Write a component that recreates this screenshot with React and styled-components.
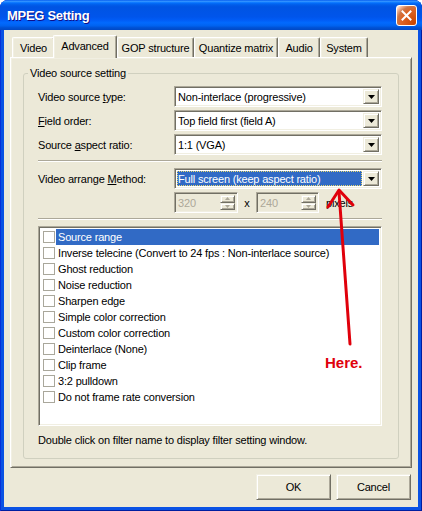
import React from "react";
import styled, { createGlobalStyle } from "styled-components";

const face = "#ECE9D8";
const shadow = "#ACA899";
const dark = "#716F64";
const light = "#F1EFE2";
const select = "#316AC5";
const ui = `"Liberation Sans", Arial, sans-serif`;

const GlobalStyle = createGlobalStyle`
  html, body { margin: 0; padding: 0; background: #ffffff; }
  body { font-family: ${ui}; font-size: 11px; letter-spacing: -0.18px; color: #000; }
  * { box-sizing: border-box; }
`;

const Window = styled.div`
  position: relative;
  width: 422px;
  height: 511px;
  display: flex;
  flex-direction: column;
  background: #0A52E4;
  border-radius: 8px 8px 0 0;
  box-shadow: inset 1px 0 #0831D9, inset -1px 0 #001EA0, inset 0 -1px #001EA0;
  overflow: hidden;
`;

const TitleBar = styled.div`
  flex: none;
  height: 30px;
  display: flex;
  align-items: center;
  justify-content: space-between;
  padding: 0 5px 0 7px;
  background: linear-gradient(
    180deg,
    #0058ee 0%,
    #3593ff 4%,
    #288eff 6%,
    #127dff 8%,
    #036ffc 10%,
    #0262ee 14%,
    #0057e5 20%,
    #0054e3 24%,
    #0055eb 56%,
    #005bf5 66%,
    #026afe 76%,
    #0062ef 86%,
    #0052d6 92%,
    #0048c4 100%
  );
`;

const Title = styled.span`
  color: #fff;
  font: bold 13px ${ui};
  letter-spacing: -0.3px;
  text-shadow: 1px 1px #0f1089;
`;

const CloseButton = styled.div`
  width: 21px;
  height: 21px;
  border: 1px solid #fff;
  border-radius: 3px;
  background: radial-gradient(
    circle at 90% 90%,
    #cc4600 0%,
    #dc6527 55%,
    #cd7546 70%,
    #ffccb2 90%,
    #fff 100%
  );
  display: flex;
  align-items: center;
  justify-content: center;
`;

const Client = styled.div`
  flex: 1;
  margin: 0 4px 4px;
  background: ${face};
  padding: 5px 6px 0;
  display: flex;
  flex-direction: column;
`;

const TabStrip = styled.div`
  height: 22px;
  display: flex;
  align-items: flex-end;
  padding-left: 2px;
  position: relative;
  z-index: 1;
`;

const Tab = styled.div`
  width: ${(p) => (p.$active ? p.$w + 2 : p.$w)}px;
  height: ${(p) => (p.$active ? 23 : 20)}px;
  margin-left: ${(p) => (p.$active ? -2 : 0)}px;
  margin-bottom: ${(p) => (p.$active ? -1 : 0)}px;
  padding-bottom: ${(p) => (p.$active ? 3 : 0)}px;
  display: flex;
  align-items: center;
  justify-content: center;
  background: ${face};
  border-top: 1px solid #fff;
  border-left: 1px solid #fff;
  border-right: 1px solid ${dark};
  border-radius: 2px 2px 0 0;
  box-shadow: inset -1px 0 ${shadow}, inset 1px 1px ${light};
  white-space: nowrap;
`;

const TabPanel = styled.div`
  height: 411px;
  border: 1px solid;
  border-color: #fff ${dark} ${dark} #fff;
  box-shadow: inset 1px 1px ${light}, inset -1px -1px ${shadow};
  background: ${face};
  padding: 9px 12px 8px;
  display: flex;
  flex-direction: column;
`;

const Group = styled.fieldset`
  flex: 1;
  margin: 0;
  padding: 0;
  border: 1px solid #d0d0bf;
  border-radius: 3px;
  min-width: 0;
`;

const Legend = styled.legend`
  margin-left: 4px;
  padding: 0 2px;
  line-height: 13px;
`;

const GroupBody = styled.div`
  display: flex;
  flex-direction: column;
  padding: 6px 16px 0 14px;
`;

const Row = styled.div`
  height: 21px;
  display: flex;
  align-items: center;
  margin-bottom: ${(p) => p.$gap ?? 3}px;
`;

const Label = styled.div`
  width: 136px;
  flex: none;
  white-space: nowrap;
`;

const Combo = styled.div`
  flex: 1;
  height: 21px;
  display: flex;
  align-items: stretch;
  padding: 2px;
  border: 1px solid;
  border-color: ${shadow} #fff #fff ${shadow};
  box-shadow: inset 1px 1px ${dark}, inset -1px -1px ${light};
  background: #fff;
`;

const ComboText = styled.div`
  flex: 1;
  display: flex;
  align-items: center;
  padding-left: 1px;
  margin-right: 1px;
  white-space: nowrap;
  ${(p) =>
    p.$focused &&
    `
    background: ${select};
    color: #fff;
    outline: 1px dotted #e8d870;
    outline-offset: -1px;
  `}
`;

const RaisedButton = styled.div`
  background: ${face};
  border: 1px solid;
  border-color: ${light} ${dark} ${dark} ${light};
  box-shadow: inset 1px 1px #fff, inset -1px -1px ${shadow};
  display: flex;
  align-items: center;
  justify-content: center;
`;

const DropButton = styled(RaisedButton)`
  width: 16px;
  flex: none;
`;

const Separator = styled.div`
  height: 2px;
  border-top: 1px solid ${shadow};
  border-bottom: 1px solid #fff;
  margin: 5px 0 6px;
`;

const SpinBox = styled.div`
  width: ${(p) => p.$w}px;
  height: 21px;
  flex: none;
  display: flex;
  padding: 2px;
  border: 1px solid;
  border-color: ${shadow} #fff #fff ${shadow};
  box-shadow: inset 1px 1px ${dark}, inset -1px -1px ${light};
  background: ${face};
`;

const SpinValue = styled.div`
  flex: 1;
  color: ${shadow};
  padding-left: 1px;
  display: flex;
  align-items: center;
`;

const SpinButtons = styled.div`
  width: 15px;
  display: flex;
  flex-direction: column;
`;

const SpinButton = styled(RaisedButton)`
  flex: 1;
`;

const Times = styled.div`
  width: 18px;
  text-align: center;
`;

const Unit = styled.div`
  margin-left: 7px;
`;

const List = styled.div`
  height: 200px;
  padding: 2px;
  border: 1px solid;
  border-color: ${shadow} #fff #fff ${shadow};
  box-shadow: inset 1px 1px ${dark}, inset -1px -1px ${light};
  background: #fff;
`;

const Item = styled.div`
  height: 16px;
  display: flex;
  align-items: center;
`;

const Check = styled.span`
  width: 12px;
  height: 12px;
  margin: 0 1px 0 2px;
  border: 1px solid #a9a79b;
  background: #fff;
  flex: none;
`;

const ItemText = styled.span`
  flex: 1;
  height: 16px;
  display: flex;
  align-items: center;
  padding-left: 2px;
  white-space: nowrap;
  background: ${(p) => (p.$selected ? select : "transparent")};
  color: ${(p) => (p.$selected ? "#fff" : "#000")};
`;

const Hint = styled.div`
  margin-top: 8px;
  line-height: 13px;
`;

const ButtonRow = styled.div`
  display: flex;
  justify-content: flex-end;
  gap: 5px;
  margin-top: 6px;
  padding-right: 1px;
`;

const PushButton = styled(RaisedButton)`
  width: 75px;
  height: 26px;
`;

const Annotation = styled.svg`
  position: absolute;
  left: 0;
  top: 0;
  pointer-events: none;
`;

const Note = styled.div`
  position: absolute;
  left: 325px;
  top: 355px;
  font: bold 15px/15px ${ui};
  letter-spacing: 0;
  color: #e0000b;
`;

function Arrow() {
  return (
    <svg width="7" height="4" viewBox="0 0 7 4">
      <polygon points="0,0 7,0 3.5,4" fill="#000" />
    </svg>
  );
}

function SmallArrow({ up }) {
  return (
    <svg width="5" height="3" viewBox="0 0 5 3">
      <polygon points={up ? "0,3 5,3 2.5,0" : "0,0 5,0 2.5,3"} fill={shadow} />
    </svg>
  );
}

function ComboBox({ value, focused }) {
  return (
    <Combo>
      <ComboText $focused={focused}>{value}</ComboText>
      <DropButton>
        <Arrow />
      </DropButton>
    </Combo>
  );
}

function Spinner({ value, w }) {
  return (
    <SpinBox $w={w}>
      <SpinValue>{value}</SpinValue>
      <SpinButtons>
        <SpinButton>
          <SmallArrow up />
        </SpinButton>
        <SpinButton>
          <SmallArrow />
        </SpinButton>
      </SpinButtons>
    </SpinBox>
  );
}

const tabs = [
  { name: "Video", w: 43 },
  { name: "Advanced", w: 62, active: true },
  { name: "GOP structure", w: 77 },
  { name: "Quantize matrix", w: 84 },
  { name: "Audio", w: 42 },
  { name: "System", w: 48 },
];

const filters = [
  "Source range",
  "Inverse telecine (Convert to 24 fps : Non-interlace source)",
  "Ghost reduction",
  "Noise reduction",
  "Sharpen edge",
  "Simple color correction",
  "Custom color correction",
  "Deinterlace (None)",
  "Clip frame",
  "3:2 pulldown",
  "Do not frame rate conversion",
];

export default function App() {
  return (
    <>
      <GlobalStyle />
      <Window>
        <TitleBar>
          <Title>MPEG Setting</Title>
          <CloseButton>
            <svg width="11" height="11" viewBox="0 0 11 11">
              <path d="M1.5 1.5 L9.5 9.5 M9.5 1.5 L1.5 9.5" stroke="#fff" strokeWidth="2" strokeLinecap="square" />
            </svg>
          </CloseButton>
        </TitleBar>
        <Client>
          <TabStrip>
            {tabs.map((t) => (
              <Tab key={t.name} $w={t.w} $active={t.active}>
                {t.name}
              </Tab>
            ))}
          </TabStrip>
          <TabPanel>
            <Group>
              <Legend>Video source setting</Legend>
              <GroupBody>
                <Row>
                  <Label>
                    Video source <u>t</u>ype:
                  </Label>
                  <ComboBox value="Non-interlace (progressive)" />
                </Row>
                <Row>
                  <Label>
                    <u>F</u>ield order:
                  </Label>
                  <ComboBox value="Top field first (field A)" />
                </Row>
                <Row $gap={0}>
                  <Label>
                    Source <u>a</u>spect ratio:
                  </Label>
                  <ComboBox value="1:1 (VGA)" />
                </Row>
                <Separator />
                <Row>
                  <Label>
                    Video arrange <u>M</u>ethod:
                  </Label>
                  <ComboBox value="Full screen (keep aspect ratio)" focused />
                </Row>
                <Row $gap={0}>
                  <Label />
                  <Spinner value="320" w={64} />
                  <Times>x</Times>
                  <Spinner value="240" w={63} />
                  <Unit>pixels</Unit>
                </Row>
                <Separator />
                <List>
                  {filters.map((f, i) => (
                    <Item key={f}>
                      <Check />
                      <ItemText $selected={i === 0}>{f}</ItemText>
                    </Item>
                  ))}
                </List>
                <Hint>Double click on filter name to display filter setting window.</Hint>
              </GroupBody>
            </Group>
          </TabPanel>
          <ButtonRow>
            <PushButton>OK</PushButton>
            <PushButton>Cancel</PushButton>
          </ButtonRow>
        </Client>
        <Annotation width="422" height="511" viewBox="0 0 422 511">
          <path d="M339 192 L350 344" stroke="#e0000b" strokeWidth="3" strokeLinecap="round" fill="none" />
          <path d="M328 207 L339 190 L353 205" stroke="#e0000b" strokeWidth="3" strokeLinecap="round" strokeLinejoin="round" fill="none" />
        </Annotation>
        <Note>Here.</Note>
      </Window>
    </>
  );
}
